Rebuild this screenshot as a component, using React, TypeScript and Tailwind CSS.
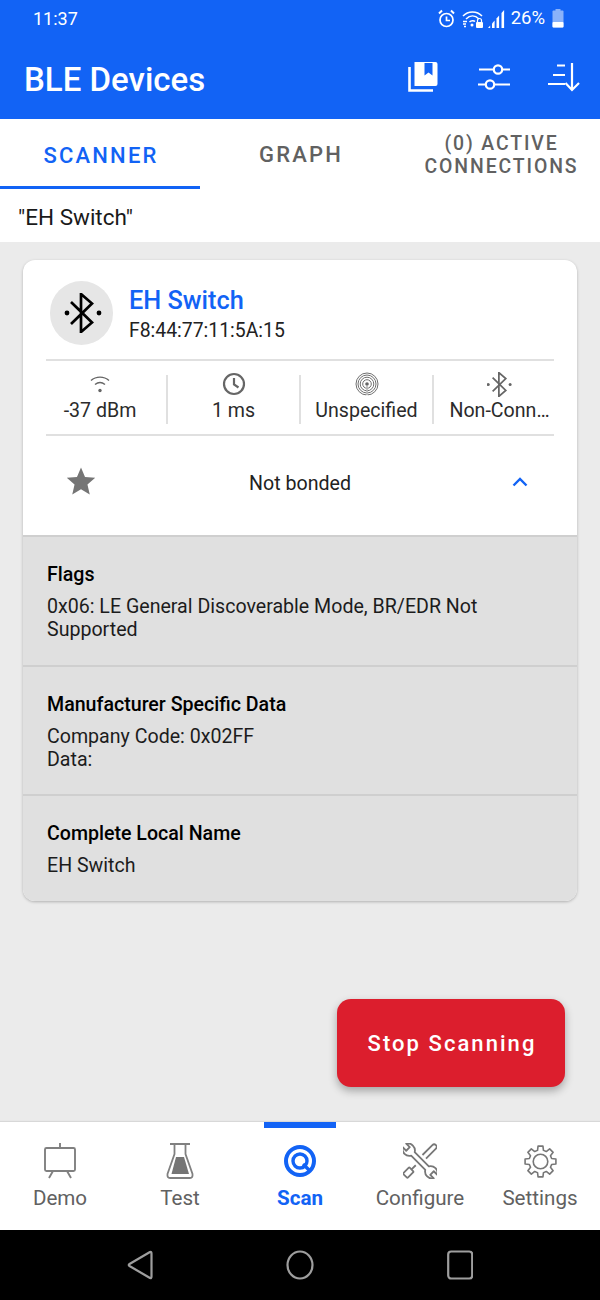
import React from "react";

function BtIcon({ size, stroke, sw, dotX }: { size: number; stroke: string; sw: number; dotX: [number, number] }) {
  return (
    <svg width={size} height={size} viewBox="0 0 40 40" fill="none">
      <path d="M9 9 L30 29.500 L19 39 V1 L30 10.500 L9 31" stroke={stroke} strokeWidth={sw} />
      <circle cx={dotX[0]} cy="20" r="2.400" fill={stroke} />
      <circle cx={dotX[1]} cy="20" r="2.400" fill={stroke} />
    </svg>
  );
}

function gearPath() {
  const pts: string[] = [];
  for (let k = 0; k < 8; k++) {
    const a = (k * Math.PI) / 4 - Math.PI / 2;
    const p = (r: number, d: number) => {
      const t = a + (d * Math.PI) / 180;
      return `${(12 + r * Math.cos(t)).toFixed(2)} ${(12 + r * Math.sin(t)).toFixed(2)}`;
    };
    pts.push(p(7.900, -15), p(10.700, -9), p(10.700, 9), p(7.900, 15));
  }
  return "M" + pts.join(" L") + " Z";
}

function Stat({ icon, label, w, border }: { icon: React.ReactNode; label: string; w: string; border?: boolean }) {
  return (
    <div className={`${w} h-[49px] flex flex-col items-center ${border ? "border-l-2 border-[#e0e0e0]" : ""}`}>
      <div className="h-[24px] flex items-center justify-center -mt-[3px] mb-[2px]">{icon}</div>
      <div className="text-[19.600px] leading-[26px] text-[#2b2b2b] whitespace-nowrap">{label}</div>
    </div>
  );
}

function Section({ title, lines }: { title: string; lines: string[] }) {
  return (
    <div className="border-t-2 border-[#cfcfcf] bg-[#e0e0e0] px-[24px] pt-[26px] pb-[23.500px]">
      <div className="text-[19.600px] leading-[23px] font-medium text-black">{title}</div>
      <div className="mt-[9px] text-[19.600px] leading-[23px] text-[#1c1c1c]">
        {lines.map((l) => (
          <div key={l}>{l}</div>
        ))}
      </div>
    </div>
  );
}

function NavItem({ icon, label, active }: { icon: React.ReactNode; label: string; active?: boolean }) {
  return (
    <div className="relative flex-1 flex flex-col items-center pt-[21px]">
      {active && <div className="absolute top-0 left-[24px] w-[72px] h-[6px] bg-[#1263f5]" />}
      <div className="h-[36px] flex items-center justify-center">{icon}</div>
      <div className={`mt-[7px] text-[20.600px] leading-[24px] ${active ? "font-bold text-[#1263f5]" : "text-[#616161]"}`}>{label}</div>
    </div>
  );
}

export default function App() {
  return (
    <div className="relative w-[600px] h-[1300px] flex flex-col bg-[#ebebeb] overflow-hidden" style={{ fontFamily: "Roboto, sans-serif" }}>
      {/* Header */}
      <div className="h-[119px] bg-[#1263f5] text-white flex flex-col">
        <div className="h-[38px] flex items-center justify-between pl-[33px] pr-[36px] pb-[1px]">
          <span className="text-[18px] leading-none">11:37</span>
          <div className="flex items-center">
            <svg width="19" height="20" viewBox="0 0 18 20" fill="none" stroke="white" strokeWidth="1.700">
              <circle cx="9" cy="11" r="6.500" />
              <path d="M9 7.500V11.500H12.500" />
              <path d="M1.500 4.500 L4.500 1.500 M13.500 1.500 L16.500 4.500" strokeWidth="2" />
            </svg>
            <svg className="ml-[6px]" width="22" height="20" viewBox="0 0 22 20" fill="none" stroke="white" strokeWidth="1.500">
              <path d="M1 7 C6 1.500 15 1.500 20 7" />
              <path d="M4 10 C8 6 13 6 17 10" />
              <path d="M7.500 13 C9 11.500 12 11.500 13 12.500" />
              <circle cx="10" cy="16" r="1.500" fill="white" stroke="none" />
              <path d="M1 12.500 H5 M1 15 H4 M2 17.500 H4" strokeWidth="1.300" />
              <rect x="14" y="13" width="7" height="6" rx="1" fill="white" stroke="none" />
              <path d="M15.500 13 V11.500 a2 2 0 0 1 4 0 V13" strokeWidth="1.200" />
            </svg>
            <svg className="ml-[3px]" width="19" height="20" viewBox="0 0 17 20" fill="white">
              <path d="M0 19 L2.200 16.500 V19 Z" />
              <path d="M4 14.500 L6.600 11.500 V19 H4 Z" />
              <path d="M8.500 9.500 L11.100 6.500 V19 H8.500 Z" />
              <path d="M13.500 4 L16.100 1 V19 H13.500 Z" />
            </svg>
            <span className="ml-[5px] text-[18.500px] leading-none">26%</span>
            <svg className="ml-[7px]" width="12" height="19" viewBox="0 0 12 19">
              <rect x="3.500" y="0" width="5" height="2" fill="#8ab2fa" />
              <rect x="0.500" y="1.500" width="11" height="17" rx="1" fill="#8ab2fa" />
              <rect x="0.500" y="13" width="11" height="5.500" rx="1" fill="white" />
            </svg>
          </div>
        </div>
        <div className="flex-1 flex items-center justify-between pl-[24px] pr-[20px]">
          <span className="text-[33px] leading-[40px] font-medium mt-[3px]">BLE Devices</span>
          <div className="flex items-center -mt-[4px]">
            <svg width="30" height="31" viewBox="0 0 30 31" fill="none">
              <path d="M1.500 6 V29.500 H25" stroke="white" strokeWidth="2.600" />
              <path d="M6.500 1 H27.500 a2 2 0 0 1 2 2 V23 a2 2 0 0 1 -2 2 H6.500 V1 Z" fill="white" />
              <path d="M16.500 2 H24.500 V14.500 L20.500 11.500 L16.500 14.500 Z" fill="#1263f5" />
            </svg>
            <svg className="ml-[40px]" width="32" height="30" viewBox="0 0 32 30" fill="none" stroke="white" strokeWidth="2.200">
              <path d="M1 7.500 H15.500 M25 7.500 H32" />
              <circle cx="20" cy="7.500" r="4.200" />
              <path d="M0 22.500 H7 M17 22.500 H32" />
              <circle cx="12" cy="22.500" r="4.200" />
            </svg>
            <svg className="ml-[38px]" width="32" height="30" viewBox="0 0 32 30" fill="none" stroke="white" strokeWidth="2.200">
              <path d="M9 3.500 H17 M5 13 H17 M0 22 H17" />
              <path d="M24 1 V28 M17.500 21 L24 28 L31 21" />
            </svg>
          </div>
        </div>
      </div>

      {/* Tabs */}
      <div className="h-[70px] bg-white flex text-[22px] tracking-[2.200px] font-medium text-[#616161]">
        <div className="w-[200px] border-b-[3px] border-[#1263f5] text-[#1263f5] flex items-center justify-center pt-[5px] pl-[2px]">SCANNER</div>
        <div className="w-[200px] flex items-center justify-center pt-[1px] pl-[2px]">GRAPH</div>
        <div className="w-[200px] text-[19.400px] leading-[23px] tracking-[1.900px] text-center flex items-center justify-center pt-[1px] pl-[3px]">
          <span>(0) ACTIVE<br />CONNECTIONS</span>
        </div>
      </div>

      {/* Filter */}
      <div className="h-[53px] bg-white pl-[18px] pt-[15px] text-[22.500px] leading-[26px] text-[#1a1a1a]">"EH Switch"</div>

      {/* Content */}
      <div className="flex-1 px-[23px] pt-[18px]">
        <div className="bg-white rounded-[12px] overflow-hidden shadow-[0_1px_3px_rgba(0,0,0,0.25)]">
          <div className="px-[23px]">
            <div className="flex items-center pt-[21px] pb-[14px] border-b-2 border-[#e0e0e0]">
              <div className="ml-[4px] w-[63px] h-[64px] rounded-full bg-[#e6e6e6] flex items-center justify-center">
                <BtIcon size={40} stroke="#000" sw={2.700} dotX={[5, 37]} />
              </div>
              <div className="ml-[16px] mt-[5px] -mb-[1px]">
                <div className="text-[25.300px] leading-[30px] font-medium text-[#1263f5]">EH Switch</div>
                <div className="text-[19.400px] leading-[30px] text-[#222]">F8:44:77:11:5A:15</div>
              </div>
            </div>
            <div className="h-[75px] flex items-start pt-[14px] border-b-2 border-[#e0e0e0]">
              <Stat
                w="w-[120px] pr-[12px]"
                label="-37 dBm"
                icon={
                  <svg width="20" height="20" viewBox="0 0 20 20" fill="none" stroke="#666" strokeWidth="1.400">
                    <path d="M1 6.500 C6 2 14 2 19 6.500" />
                    <path d="M5 10.500 C8 8 12 8 15 10.500" />
                    <circle cx="10" cy="16.500" r="1.700" fill="#666" stroke="none" />
                  </svg>
                }
              />
              <Stat
                border
                w="w-[133px]"
                label="1 ms"
                icon={
                  <svg width="24" height="24" viewBox="0 0 24 24" fill="none" stroke="#666" strokeWidth="2.200">
                    <circle cx="12" cy="12" r="10" />
                    <path d="M12 6 V12.500 L16.500 15.500" />
                  </svg>
                }
              />
              <Stat
                border
                w="w-[133px]"
                label="Unspecified"
                icon={
                  <svg width="24" height="24" viewBox="0 0 24 24" fill="none" stroke="#707070" strokeWidth="1">
                    <circle cx="12" cy="12" r="1.800" fill="#666" stroke="none" />
                    <circle cx="12" cy="12" r="4.300" />
                    <circle cx="12" cy="12" r="6.800" />
                    <circle cx="12" cy="12" r="9" />
                    <circle cx="12" cy="12" r="11" />
                    <path d="M12 14 V24" stroke="white" strokeWidth="1.500" />
                    <path d="M12 14 V23" strokeWidth="0.800" />
                  </svg>
                }
              />
              <Stat border w="w-[121px] pl-[12px]" label="Non-Conn…" icon={<BtIcon size={25} stroke="#666" sw={2.800} dotX={[2, 37]} />} />
            </div>
            <div className="h-[99px] grid grid-cols-[1fr_auto_1fr] items-center pb-[4px]">
              <svg className="ml-[20px] mb-[6px]" width="30" height="28" viewBox="0 0 24 23" fill="#757575">
                <path d="M12 0.500 L15.300 8.200 L23.700 8.900 L17.300 14.400 L19.200 22.600 L12 18.300 L4.800 22.600 L6.700 14.400 L0.300 8.900 L8.700 8.200 Z" />
              </svg>
              <div className="text-center text-[19.600px] leading-[24px] text-[#222]">Not bonded</div>
              <svg className="justify-self-end mr-[26px] mb-[4px]" width="16" height="10" viewBox="0 0 16 10" fill="none" stroke="#1263f5" strokeWidth="2.400">
                <path d="M1.500 8.500 L8 2 L14.500 8.500" />
              </svg>
            </div>
          </div>
          <Section title="Flags" lines={["0x06: LE General Discoverable Mode, BR/EDR Not", "Supported"]} />
          <Section title="Manufacturer Specific Data" lines={["Company Code: 0x02FF", "Data:"]} />
          <Section title="Complete Local Name" lines={["EH Switch"]} />
        </div>
      </div>

      {/* FAB */}
      <div className="absolute left-[337px] top-[999px] w-[228px] h-[88px] rounded-[14px] bg-[#dc1e2d] text-white flex items-center justify-center pl-[2px] text-[22px] font-medium tracking-[2.050px] shadow-[0_4px_8px_rgba(0,0,0,0.3)]">
        Stop Scanning
      </div>

      {/* Bottom nav */}
      <div className="h-[108px] bg-white flex shadow-[0_-1px_1px_rgba(0,0,0,0.08)]">
        <NavItem
          label="Demo"
          icon={
            <svg width="34" height="36" viewBox="0 0 34 36" fill="none" stroke="#808080" strokeWidth="1.900">
              <rect x="2" y="5" width="30" height="23" rx="1.500" />
              <path d="M17 0 V5 M10 28 L6 35 M24 28 L28 35" />
            </svg>
          }
        />
        <NavItem
          label="Test"
          icon={
            <svg width="28" height="36" viewBox="0 0 28 36" fill="none" stroke="#808080" strokeWidth="1.800">
              <path d="M4 1 H24 M8.500 1 V11 L1.500 31 Q1 35 4 35 H24 Q27 35 26.500 31 L19.500 11 V1" />
              <path d="M10 14 H18 L23 31 H5.500 Z" fill="#757575" stroke="none" />
            </svg>
          }
        />
        <NavItem
          active
          label="Scan"
          icon={
            <svg width="34" height="34" viewBox="0 0 34 34" fill="none" stroke="#1263f5">
              <circle cx="17" cy="17" r="14" strokeWidth="4" />
              <circle cx="17" cy="17" r="7" strokeWidth="3.400" />
              <path d="M20 20 L27 27" strokeWidth="3.400" />
            </svg>
          }
        />
        <NavItem
          label="Configure"
          icon={
            <svg width="34" height="36" viewBox="0 0 34 36" fill="none" stroke="#777" strokeWidth="1.800" strokeLinejoin="round">
              <g transform="translate(17 18) rotate(-45)">
                <path d="M-2.500 -22 V-17 H2.500 V-22 A7 7 0 0 1 2.500 -10 V10 A7 7 0 0 1 2.500 22 V17 H-2.500 V22 A7 7 0 0 1 -2.500 10 V-10 A7 7 0 0 1 -2.500 -22 Z" />
              </g>
              <g transform="translate(17 18) rotate(45)">
                <path d="M-2.500 -6 V-20 A2.500 2.500 0 0 1 2.500 -20 V-6" />
                <path d="M0 6 V12" />
                <rect x="-3.200" y="12" width="6.400" height="9" rx="1" />
              </g>
            </svg>
          }
        />
        <NavItem
          label="Settings"
          icon={
            <svg width="35" height="35" viewBox="0 0 24 24" fill="none" stroke="#777" strokeWidth="1.100" strokeLinejoin="round">
              <circle cx="12" cy="12" r="5" />
              <path d={gearPath()} />
            </svg>
          }
        />
      </div>

      {/* System nav */}
      <div className="h-[70px] bg-black flex items-center justify-center">
        <svg width="26" height="30" viewBox="0 0 26 30" fill="none" stroke="#9e9e9e" strokeWidth="2.200" strokeLinejoin="round">
          <path d="M23 2 Q24.500 1.500 24.500 3.500 V26.500 Q24.500 28.500 23 28 L2.500 16 Q1 15 2.500 14 Z" />
        </svg>
        <svg className="ml-[133px]" width="28" height="30" viewBox="0 0 28 30" fill="none" stroke="#9e9e9e" strokeWidth="2.200">
          <ellipse cx="14" cy="15" rx="12.500" ry="13.500" />
        </svg>
        <svg className="ml-[133px]" width="26" height="30" viewBox="0 0 26 30" fill="none" stroke="#9e9e9e" strokeWidth="2.200">
          <rect x="1.200" y="1.500" width="24" height="27" rx="3" />
        </svg>
      </div>
    </div>
  );
}
